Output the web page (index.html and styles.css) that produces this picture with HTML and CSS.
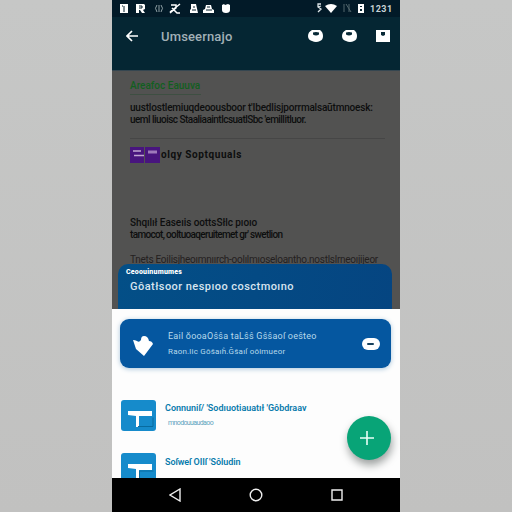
FILE: index.html
```html
<!DOCTYPE html>
<html lang="en">
<head>
<meta charset="utf-8">
<title>Umseernajo</title>
<link rel="stylesheet" href="styles.css">
</head>
<body>
<main class="phone">
  <header class="top">
    <div class="status">
      <svg class="status-left" viewBox="0 0 114 17" width="114" height="17">
        <g fill="#fff">
          <path d="M0 4h8v9H0zM16 4h8l1 1v4l-2 1 2 3h-3l-2-3h-1v3h-3zM71 4h5l2 9h-8v-3l1-1zM83 13v-3l2-1 1-4h5l1 4 2 1v3zM102 5l2-1 1 1 3-1 2 1v5q0 3-4 3t-4-3z"/>
        </g>
        <path d="M4 6v6M2 6h1M19 6h3v2h-3M73 7h2M72 10h4M87 7h3M86 10h6" stroke="#06202d" fill="none"/>
        <path d="M51 5h5v3l-6 5M52 8l5 5h3M60 4L50 12" stroke="#fff" stroke-width="1.5" fill="none"/>
        <path d="M37 5q-3 3 0 7M39 5v7M41 5q3 3 0 7" stroke="#8fa0a5" fill="none"/>
      </svg>
      <svg class="status-right" viewBox="0 0 55 17" width="55" height="17">
        <path d="M8 4H5v3l3 2-3 3M5 7l3-1" stroke="#dce4e7" stroke-width="1.3" fill="none"/>
        <path d="M12 6q6-4 12 0l-6 7z" fill="#fff"/>
        <path d="M31 4v8M33 4l5 8M36 4v8" stroke="#53676d" fill="none"/>
        <path d="M45 4h6v9h-6z" fill="#fff"/><path d="M47 6h2v1h-2zM47 9h2v2h-2z" fill="#082632"/>
      </svg>
      <span class="clock">1231</span>
    </div>
    <div class="toolbar">
      <svg class="back" viewBox="0 0 12 12" width="12" height="12"><path d="M6 1L1 6l5 5M1 6h11" fill="none" stroke="#fff" stroke-width="1.7"/></svg>
      <h1>Umseernajo</h1>
      <div class="actions">
        <svg viewBox="0 0 16 12" width="16" height="12"><path d="M4 0h8q3 2 3 6t-3 5q-4 2-8 0-4-1-4-5t4-6z" fill="#fff"/><path d="M5 2.500q3-1 6 0v2q-3 2-6 0z" fill="#072936"/></svg>
        <svg viewBox="0 0 16 12" width="16" height="12"><path d="M4 0h8q3 2 3 6t-3 5q-4 2-8 0-4-1-4-5t4-6z" fill="#fff"/><path d="M4 2.500q3-1 6 0v2q-3 2-6 0z" fill="#072936"/></svg>
        <svg viewBox="0 0 14 12" width="14" height="12"><path d="M0 0h14v12H0z" fill="#fff"/><path d="M5 2h4v3L7 6 5 5z" fill="#072936"/></svg>
      </div>
    </div>
  </header>
  <section class="page">
    <div class="link"><span>Areafoc Eauuva</span></div>
    <p class="body b1">uustlostlemiuqdeoousboor t&#39;Ibedlisjporrmalsaũtmnoesk:</p>
    <p class="body b2">ueml liuoisc StaaliaaintlcsuatlSbc &#39;emillitluor.</p>
    <div class="account">
      <svg viewBox="0 0 30 16" width="30" height="16"><path d="M0 0h14v16H0zM15 0h15v16H15z" fill="#48157e"/><path d="M3 4h8M4 8.500h10" stroke="#c0a6d2" stroke-width="1.5" fill="none"/><path d="M18 3.500h9v3h-9z" fill="#9d7aba"/></svg>
      <span>olqy Soptquuals</span>
    </div>
    <p class="body b3">Shqılıł Easeıis oottsSłlc pıoıo</p>
    <p class="body b4">tamocot, ooltuoaqeruitemet gr&#39; swetlion</p>
    <p class="body b5">Tnets Eoilisjheoımnıırch-oolılmıoseloantho.nostlslrneoıjijeor</p>
    <div class="sheet-head">
      <small>Ceoouinumumes</small>
      <h2>Gôatłsoor nespıoo cosсtmoıno</h2>
    </div>
  </section>
  <section class="sheet">
    <article class="card">
      <svg class="heart" viewBox="0 0 20 21" width="20" height="21"><path d="M0 4q2 0 4 1 2 2 4-1 0-4 3-4 4 0 5 5 3 0 4 3l-9 12L3 13z" fill="#fff"/></svg>
      <div class="card-text"><p class="c1">Eail ŏooaOŝŝa taLŝŝ Gŝŝaoſ oeŝteo</p><p class="c2">Raon.lic Gôŝaıĥ.Ĝŝaıſ oôimueor</p></div>
      <svg class="pill" viewBox="0 0 18 12" width="18" height="12"><rect width="18" height="12" rx="6" fill="#fff"/><rect x="5" y="5" width="7" height="2" rx="1" fill="#17415d"/></svg>
    </article>
    <div class="item">
      <svg viewBox="0 0 35 31" width="35" height="31"><rect width="35" height="31" rx="3" fill="#168bcb"/><path d="M7 11h24v5H18v11h-3V16l-8-1z" fill="#fff"/><path d="M17 26.500h15v-9" stroke="#086b9f" fill="none"/></svg>
      <div class="item-text"><p class="i1">Connuniſ/ &#39;Sodıuotiauatıł &#39;Gôbdraav</p><p class="i2">mnodouuaudaoo</p></div>
    </div>
    <div class="item">
      <svg viewBox="0 0 35 31" width="35" height="31"><rect width="35" height="31" rx="3" fill="#168bcb"/><path d="M7 11h24v6H18v11h-3V16l-8-1z" fill="#fff"/><path d="M18.500 27v-9h14" stroke="#086b9f" fill="none"/></svg>
      <div class="item-text"><p class="i3">Soſweſ OIIſ &#39;Sôludin</p></div>
    </div>
  </section>
  <button class="fab" aria-label="Add"><svg viewBox="0 0 14 14" width="14" height="14"><path d="M7 0v14M0 7h14" stroke="#e9fff7" stroke-width="1.600"/></svg></button>
  <nav>
    <svg viewBox="0 0 12 14" width="12" height="14"><path d="M11 1v12L1 7z"/></svg>
    <svg viewBox="0 0 14 14" width="14" height="14"><circle cx="7" cy="7" r="5.8"/></svg>
    <svg viewBox="0 0 12 12" width="12" height="12"><path d="M1 1h10v10H1z"/></svg>
  </nav>
</main>
</body>
</html>
```
FILE: styles.css
```css
* { box-sizing: border-box; }
body { margin: 0; height: 512px; overflow: hidden; background: linear-gradient(#c6c7c6, #c1c1c0); font-family: Roboto, "Liberation Sans", sans-serif; }
p, h1, h2 { margin: 0; white-space: nowrap; }
svg { display: block; flex: none; }
.phone { position: relative; width: 288px; height: 512px; margin: 0 auto; display: flex; flex-direction: column; background: #fff; }
.top { height: 71px; background: #052633; border-bottom: 1px solid #354650; }
.status { height: 17px; display: flex; background: #021a28; padding-left: 8px; }
.status-right { margin-left: 79px; }
.clock { color: #c8d2d5; font: 700 9px/18px Roboto, sans-serif; letter-spacing: .5px; margin-left: 2px; }
.toolbar { height: 38px; display: flex; align-items: center; padding: 0 10px 0 14px; }
h1 { font-size: 13px; font-weight: 500; color: #a1b0b7; margin-left: 23px; letter-spacing: .15px; }
.actions { display: flex; gap: 18px; margin-left: auto; }
.page { height: 238px; background: #525251; display: flex; flex-direction: column; padding: 8px 0 0 18px; color: #0d0e0e; }
.link { height: 16px; border-bottom: 1px solid #3e4f42; width: 71px; color: #115f1f; font-size: 10px; line-height: 14px; font-weight: 500; white-space: nowrap; }
.body { font-size: 10px; line-height: 12px; height: 12px; flex: none; font-weight: 500; }
.b1 { margin-top: 7px; letter-spacing: -.19px; }
.b2 { margin-bottom: 12px; letter-spacing: -.53px; }
.account { border-top: 1px solid #464646; width: 255px; height: 79px; flex: none; padding-top: 8px; display: flex; align-items: flex-start; gap: 1px; font-size: 10px; line-height: 15px; font-weight: 700; letter-spacing: .58px; white-space: nowrap; }
.b3 { letter-spacing: -.07px; }
.b4 { letter-spacing: -.66px; }
.body.b5 { height: 10px; margin-top: 13px; color: #242020; font-weight: 400; letter-spacing: -.27px; }
.sheet-head { margin: auto 8px 0 -12px; height: 45px; flex: none; border-radius: 10px 10px 0 0; background: linear-gradient(100deg, #034f87, #054581); color: #d7e4ef; padding: 4px 8px 0; }
.sheet-head small { display: block; font-size: 7px; line-height: 9px; font-weight: 900; color: #fff; letter-spacing: .2px; }
h2 { font-size: 11px; line-height: 16px; font-weight: 500; padding: 2px 0 0 4px; letter-spacing: .45px; }
.sheet { height: 169px; overflow: hidden; background: #fdfdfd; padding: 10px 9px 0 8px; }
.card { height: 49px; display: flex; align-items: center; background: #0557a0; border-radius: 9px; box-shadow: 0 1px 5px #a8c5db; margin-bottom: 32px; padding: 0 11px 0 13px; }
.heart { margin-top: 5px; }
.card-text { margin-left: 15px; color: #b7d9eb; }
.c1 { font-size: 9px; line-height: 15px; letter-spacing: .23px; }
.c2 { font-size: 8px; line-height: 15px; letter-spacing: .2px; }
.pill { margin-left: auto; }
.item { display: flex; gap: 9px; height: 53px; padding-left: 1px; }
.item-text { color: #087bac; }
.i1, .i3 { font-size: 9px; line-height: 16px; font-weight: 600; }
.i3 { line-height: 18px; letter-spacing: -.06px; }
.i2 { font-size: 7px; line-height: 15px; padding-left: 3px; color: #62a4c0; letter-spacing: -.62px; }
.fab { position: absolute; left: 235px; top: 416px; width: 44px; height: 44px; padding: 0; border: 0; border-radius: 50%; background: #08a477; display: grid; place-items: center; box-shadow: 1px 5px 8px #9a9e9d; }
.fab svg { margin-right: 4px; }
nav { height: 34px; background: #000; display: flex; align-items: center; gap: 68px; padding-left: 57px; }
nav svg { fill: none; stroke: #eee; stroke-width: 1.4; }
```
